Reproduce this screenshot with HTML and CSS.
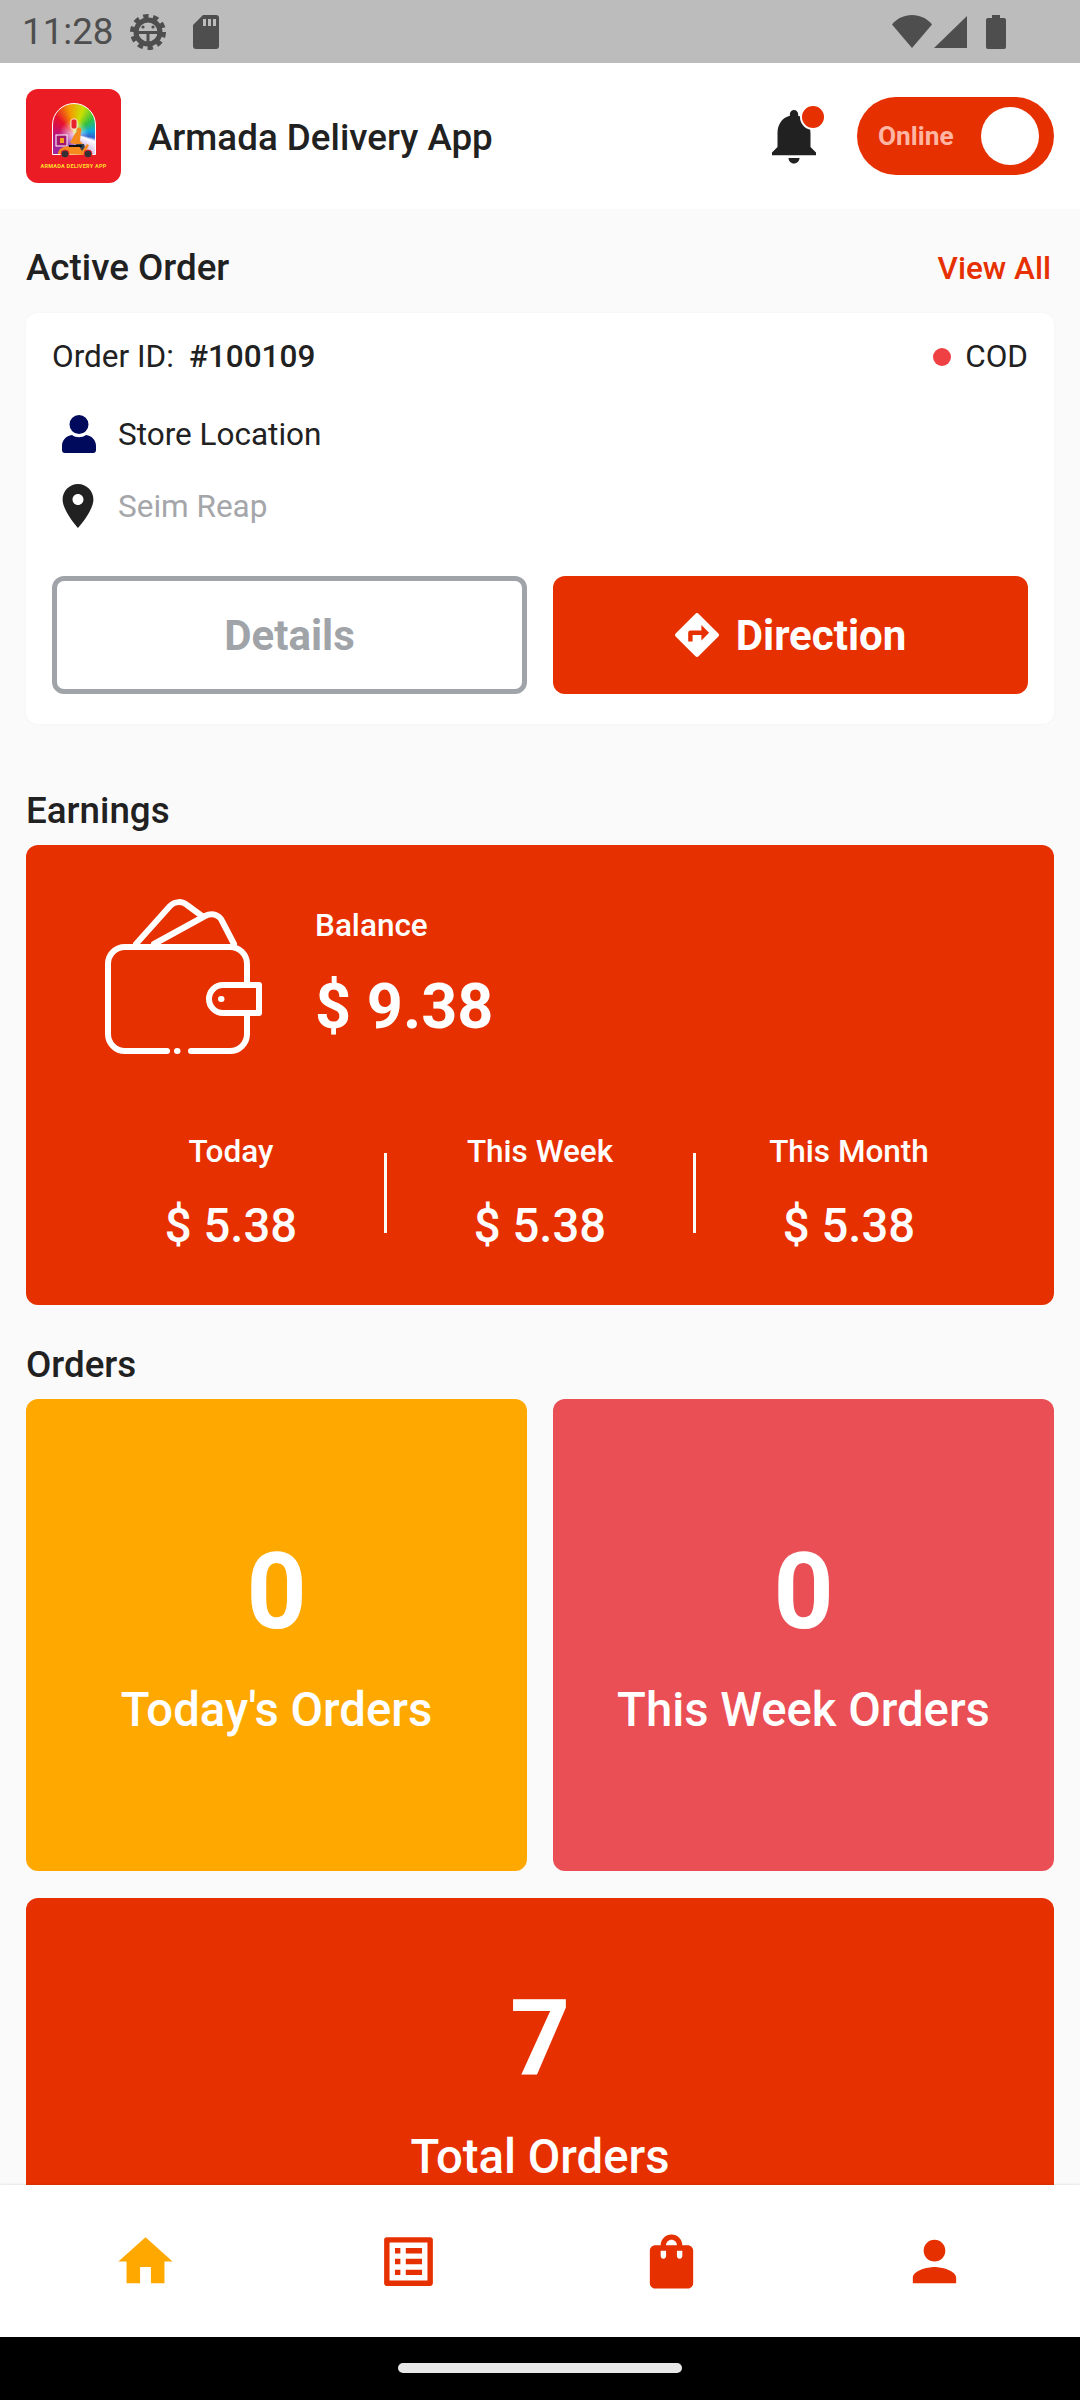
FILE: index.html
```html
<!DOCTYPE html>
<html lang="en">
<head>
  <meta charset="UTF-8">
  <title>Armada Delivery App</title>
  <link rel="stylesheet" href="styles.css">
</head>
<body>

  <div class="status-bar">
    <span class="status-time">11:28</span>
    <svg class="ic-gear" viewBox="0 0 36 36">
      <circle cx="18" cy="18" r="15.5" fill="none" stroke="#4e4e4e" stroke-width="5" stroke-dasharray="5.2 4.5"/>
      <circle cx="18" cy="18" r="12" fill="none" stroke="#4e4e4e" stroke-width="5"/>
      <rect x="7" y="17" width="22" height="3" fill="#4e4e4e"/>
      <rect x="16.5" y="17" width="3" height="12" fill="#4e4e4e"/>
      <circle cx="13" cy="13" r="1.6" fill="#4e4e4e"/>
      <circle cx="23" cy="13" r="1.6" fill="#4e4e4e"/>
    </svg>
    <svg class="ic-sd" viewBox="0 0 26 34">
      <path fill="#4e4e4e" d="M10 0h13a3 3 0 0 1 3 3v28a3 3 0 0 1-3 3H3a3 3 0 0 1-3-3V10z"/>
      <path fill="#bcbcbc" d="M10 4h3v7h-3zM15 4h3v7h-3zM20 4h3v7h-3z"/>
    </svg>
    <span class="status-spacer"></span>
    <svg class="ic-wifi" viewBox="0 0 40 33"><path fill="#4e4e4e" d="M20 33 0 9.500C5 3.500 12 0 20 0s15 3.500 20 9.500z"/></svg>
    <svg class="ic-signal" viewBox="0 0 33 32"><path fill="#4e4e4e" d="M33 0v32H0z"/></svg>
    <svg class="ic-battery" viewBox="0 0 20 34"><path fill="#4e4e4e" d="M6 0h8v3h4a2 2 0 0 1 2 2v27a2 2 0 0 1-2 2H2a2 2 0 0 1-2-2V5a2 2 0 0 1 2-2h4z"/></svg>
  </div>

  <header class="app-bar">
    <div class="logo">
      <div class="logo-arch">
        <svg class="logo-scooter" viewBox="0 0 44 56">
          <rect x="19" y="16" width="6" height="10" rx="2" fill="#e8232a" stroke="#fff" stroke-width=".8"/>
          <rect x="4" y="32" width="11" height="11" fill="#a3166e" stroke="#fff" stroke-width="1"/>
          <rect x="8" y="35" width="4" height="5" fill="#f6a21c"/>
          <path d="M18 40l4-8 3-4 4 1-1 9 5 5z" fill="#f58a1f"/>
          <circle cx="27" cy="27" r="2.500" fill="#f58a1f"/>
          <path d="M24 41h8l2 7h-8z" fill="#33404f"/>
          <path d="M6 51c0-5 5-8 12-8h9l3 5 5-7 2 1-5 10z" fill="#f58a1f"/>
          <path d="M17 42h13v2H17z" fill="#111"/>
          <circle cx="13" cy="51" r="4" fill="#333" stroke="#e8232a"/>
          <circle cx="36" cy="51" r="4" fill="#333" stroke="#e8232a"/>
        </svg>
      </div>
      <span class="logo-text">ARMADA DELIVERY APP</span>
    </div>
    <h1 class="app-title">Armada Delivery App</h1>
    <div class="bell">
      <svg class="ic-bell" viewBox="0 0 24 24"><path fill="#212121" d="M12 22c1.100 0 2-.9 2-2h-4c0 1.100.89 2 2 2zm6-6v-5c0-3.070-1.640-5.640-4.500-6.320V4c0-.83-.67-1.500-1.500-1.500s-1.500.67-1.500 1.500v.68C7.630 5.360 6 7.920 6 11v5l-2 2v1h16v-1l-2-2z"/></svg>
      <span class="bell-dot"></span>
    </div>
    <div class="toggle">
      <span class="toggle-label">Online</span>
      <span class="toggle-knob"></span>
    </div>
  </header>

  <main class="content">
    <div class="section-head">
      <h2 class="section-title">Active Order</h2>
      <a class="view-all">View All</a>
    </div>

    <section class="order-card">
      <div class="order-top">
        <span class="order-id">Order ID:<b>#100109</b></span>
        <span class="order-pay"><i class="pay-dot"></i>COD</span>
      </div>
      <div class="order-line order-store">
        <svg class="ic-line" viewBox="0 0 52 44"><path fill="#000a5c" d="M27 3a9.500 9.500 0 0 1 0 19 9.500 9.500 0 0 1 0-19zM20 23c4 3 10 3 14 0 6 1 10 5 10 11v4c0 2-1 3-3 3H13c-2 0-3-1-3-3v-4c0-6 4-10 10-11z"/></svg>
        <span>Store Location</span>
      </div>
      <div class="order-line order-place">
        <svg class="ic-line" viewBox="0 0 52 44"><g transform="translate(-.4 -4.400) scale(2.200)"><path fill="#212121" d="M12 2C8.130 2 5 5.130 5 9c0 5.250 7 13 7 13s7-7.750 7-13c0-3.870-3.130-7-7-7zm0 9.500c-1.380 0-2.500-1.120-2.500-2.500s1.120-2.500 2.500-2.500 2.500 1.120 2.500 2.500-1.120 2.500-2.500 2.500z"/></g></svg>
        <span>Seim Reap</span>
      </div>
      <div class="order-buttons">
        <button class="btn btn-outline">Details</button>
        <button class="btn btn-solid">
          <svg class="ic-direction" viewBox="2 2 20 20"><path fill="#fff" d="M21.710 11.290l-9-9c-.39-.39-1.020-.39-1.410 0l-9 9c-.39.39-.39 1.020 0 1.410l9 9c.39.39 1.020.39 1.410 0l9-9c.39-.38.39-1.010 0-1.410zM14 14.500V12h-4v3H8v-4c0-.55.45-1 1-1h5V7.500l3.500 3.500-3.500 3.500z"/></svg>
          Direction
        </button>
      </div>
    </section>

    <h2 class="section-title earnings-title">Earnings</h2>
    <section class="earn-card">
      <div class="earn-top">
        <svg class="ic-wallet" viewBox="0 0 158 158" fill="none" stroke="#fff" stroke-width="6" stroke-linecap="round" stroke-linejoin="round">
          <path d="M142 86V66a17 17 0 0 0-17-17H20A17 17 0 0 0 3 66v70a17 17 0 0 0 17 17h42M86 153h39a17 17 0 0 0 17-17v-19"/>
          <path d="M72 153h.5"/>
          <path d="M154 87h-36a14 14 0 0 0 0 28h36z"/>
          <path d="M116 101h.5"/>
          <path d="M31 46 65 8c5-5 12-5 17-1l15 11"/>
          <path d="M49 46 100 18c6-3 12-2 16 3l13 25"/>
        </svg>
        <div class="balance">
          <div class="balance-label">Balance</div>
          <div class="balance-value">$ 9.38</div>
        </div>
      </div>
      <div class="earn-stats">
        <div class="stat">
          <div class="stat-label">Today</div>
          <div class="stat-value">$ 5.38</div>
        </div>
        <span class="stat-line"></span>
        <div class="stat">
          <div class="stat-label">This Week</div>
          <div class="stat-value">$ 5.38</div>
        </div>
        <span class="stat-line"></span>
        <div class="stat">
          <div class="stat-label">This Month</div>
          <div class="stat-value">$ 5.38</div>
        </div>
      </div>
    </section>

    <h2 class="section-title orders-title">Orders</h2>
    <div class="orders-grid">
      <div class="count-card count-yellow">
        <div class="count-num">0</div>
        <div class="count-label">Today's Orders</div>
      </div>
      <div class="count-card count-pink">
        <div class="count-num">0</div>
        <div class="count-label">This Week Orders</div>
      </div>
    </div>
    <div class="count-card count-total">
      <div class="count-num">7</div>
      <div class="count-label">Total Orders</div>
    </div>
  </main>

  <nav class="bottom-nav">
    <svg class="ic-nav" viewBox="0 0 24 24"><path fill="#ffa800" d="M10 20v-6h4v6h5v-8h3L12 3 2 12h3v8z"/></svg>
    <svg class="ic-nav" viewBox="0 0 24 24"><path fill="#e63000" d="M19 5v14H5V5h14m1.100-2H3.900c-.5 0-.9.4-.9.9v16.200c0 .4.4.9.9.9h16.200c.4 0 .9-.5.9-.9V3.900c0-.5-.5-.9-.9-.9zM11 7h6v2h-6V7zm0 4h6v2h-6v-2zm0 4h6v2h-6v-2zM7 7h2v2H7zm0 4h2v2H7zm0 4h2v2H7z"/></svg>
    <svg class="ic-nav" viewBox="0 0 24 24"><path fill="#e63000" d="M18 6h-2c0-2.210-1.790-4-4-4S8 3.790 8 6H6c-1.100 0-2 .9-2 2v12c0 1.100.9 2 2 2h12c1.100 0 2-.9 2-2V8c0-1.100-.9-2-2-2zm-8 4c0 .55-.45 1-1 1s-1-.45-1-1V8h2v2zm2-6c1.100 0 2 .9 2 2h-4c0-1.100.9-2 2-2zm4 6c0 .55-.45 1-1 1s-1-.45-1-1V8h2v2z"/></svg>
    <svg class="ic-nav" viewBox="0 0 24 24"><path fill="#e63000" d="M12 12c2.210 0 4-1.790 4-4s-1.790-4-4-4-4 1.790-4 4 1.790 4 4 4zm0 2c-2.670 0-8 1.340-8 4v2h16v-2c0-2.660-5.330-4-8-4z"/></svg>
  </nav>

  <div class="gesture-bar"><span class="gesture-pill"></span></div>

</body>
</html>
```

FILE: styles.css
```css
* {
  box-sizing: border-box;
}
html, body {
  margin: 0;
  height: 2400px;
}
body {
  display: flex;
  flex-direction: column;
  overflow: hidden;
  background: #fafafa;
  color: #212121;
  font-family: Roboto, "Liberation Sans", sans-serif;
}
h1, h2 {
  margin: 0;
}

/* status bar */
.status-bar {
  height: 63px;
  flex: none;
  display: flex;
  align-items: center;
  padding: 0 74px 0 22px;
  background: #bcbcbc;
  color: #4e4e4e;
}
.status-time {
  font-size: 36.75px;
  line-height: 63px;
  width: 108px;
}
.ic-gear {
  width: 36px;
  height: 36px;
}
.ic-sd {
  width: 26px;
  height: 34px;
  margin-left: 27px;
}
.status-spacer {
  flex: 1;
}
.ic-wifi {
  width: 40px;
  height: 33px;
}
.ic-signal {
  width: 33px;
  height: 32px;
  margin-left: 2px;
}
.ic-battery {
  width: 20px;
  height: 34px;
  margin-left: 19px;
}

/* app bar */
.app-bar {
  height: 146px;
  flex: none;
  display: flex;
  align-items: center;
  padding: 0 26px;
  background: #fff;
}
.logo {
  width: 95px;
  height: 94px;
  flex: none;
  display: flex;
  flex-direction: column;
  align-items: center;
  padding-top: 14px;
  border-radius: 12px;
  background: #ec1c24;
}
.logo-arch {
  position: relative;
  width: 44px;
  height: 52px;
  border: 1px solid #fff;
  border-radius: 22px 22px 0 0;
  background:
    radial-gradient(circle at 50% 60%, #fffc 0, #fff0 40%),
    conic-gradient(from -90deg at 50% 60%, #c2127a, #e8102a 45deg, #f59a00 80deg, #c9e000 110deg, #33c040 140deg, #10a8e0 170deg, #3060d0 190deg, #fff 200deg, #8a2fb0 290deg, #c2127a);
}
.logo-scooter {
  position: absolute;
  left: -1px;
  top: -1px;
  width: 44px;
  height: 56px;
  overflow: visible;
}
.logo-text {
  margin-top: 8px;
  font-size: 5.5px;
  line-height: 7px;
  font-weight: 700;
  letter-spacing: .25px;
  white-space: nowrap;
  color: #ffdf2b;
}
.app-title {
  flex: 1;
  margin: 3px 0 0 27px;
  font-size: 36.75px;
  font-weight: 500;
}
.bell {
  position: relative;
  width: 66px;
  height: 66px;
  margin-right: 30px;
}
.ic-bell {
  display: block;
  width: 66px;
  height: 66px;
}
.bell-dot {
  position: absolute;
  left: 39px;
  top: 1px;
  width: 26px;
  height: 26px;
  border-radius: 50%;
  border: 2px solid #fff;
  background: #e63000;
}
.toggle {
  width: 197px;
  height: 78px;
  display: flex;
  align-items: center;
  justify-content: space-between;
  padding: 0 15px 0 21px;
  border-radius: 39px;
  background: #e63000;
}
.toggle-label {
  font-size: 26.25px;
  font-weight: 700;
  color: #ffb5a3;
}
.toggle-knob {
  width: 58px;
  height: 58px;
  border-radius: 50%;
  background: #fff;
}

/* main content */
.content {
  flex: 1;
  min-height: 0;
  overflow: hidden;
  padding: 39px 26px 0;
}
.section-head {
  display: flex;
  justify-content: space-between;
  align-items: center;
  margin-bottom: 25px;
}
.section-title {
  font-size: 36.75px;
  line-height: 40px;
  font-weight: 500;
}
.view-all {
  padding-right: 3px;
  font-size: 31.5px;
  font-weight: 500;
  color: #e63000;
}

.order-card {
  padding: 26px 26px 30px;
  border-radius: 12px;
  background: #fff;
  box-shadow: 0 0 3px #0000000a;
}
.order-top {
  display: flex;
  justify-content: space-between;
  font-size: 31.5px;
  line-height: 36px;
}
.order-id b {
  margin-left: 15px;
  font-weight: 500;
}
.order-pay {
  display: flex;
  align-items: center;
}
.pay-dot {
  width: 18px;
  height: 18px;
  margin-right: 14px;
  border-radius: 50%;
  background: #ef4044;
}
.order-line {
  display: flex;
  align-items: center;
  height: 44px;
  font-size: 31.5px;
}
.order-store {
  margin-top: 37px;
}
.order-place {
  margin-top: 28px;
  color: #a4a6aa;
}
.ic-line {
  width: 52px;
  height: 44px;
  margin-right: 14px;
}
.order-buttons {
  display: grid;
  grid-template-columns: 1fr 1fr;
  gap: 26px;
  margin-top: 48px;
}
.btn {
  height: 118px;
  display: flex;
  align-items: center;
  justify-content: center;
  gap: 17px;
  border-radius: 12px;
  font-family: inherit;
  font-size: 42px;
  font-weight: 700;
}
.btn-outline {
  border: 5px solid #a0a4a9;
  background: #fff;
  color: #a0a4a9;
}
.btn-solid {
  border: none;
  background: #e63000;
  color: #fff;
}
.ic-direction {
  width: 44px;
  height: 44px;
}

/* earnings */
.earnings-title {
  margin: 67px 0 14px;
}
.earn-card {
  padding: 53px 52px 51px;
  border-radius: 12px;
  background: #e63000;
  color: #fff;
}
.earn-top {
  display: flex;
  padding-left: 27px;
}
.ic-wallet {
  width: 158px;
  height: 158px;
  overflow: visible;
}
.balance {
  margin-left: 52px;
  padding-top: 8px;
}
.balance-label {
  font-size: 31.5px;
  line-height: 40px;
  font-weight: 500;
}
.balance-value {
  margin-top: 25px;
  font-size: 63px;
  line-height: 72px;
  font-weight: 700;
}
.earn-stats {
  display: flex;
  align-items: center;
  margin-top: 76px;
}
.stat {
  flex: 1;
  text-align: center;
}
.stat-label {
  font-size: 31.5px;
  line-height: 40px;
  font-weight: 500;
}
.stat-value {
  margin-top: 26px;
  font-size: 47.25px;
  line-height: 56px;
  font-weight: 500;
}
.stat-line {
  width: 3px;
  height: 80px;
  background: #fff;
}

/* orders */
.orders-title {
  margin: 40px 0 14px;
}
.orders-grid {
  display: grid;
  grid-template-columns: 1fr 1fr;
  gap: 26px;
}
.count-card {
  height: 472px;
  padding-top: 134px;
  border-radius: 12px;
  text-align: center;
  color: #fff;
}
.count-yellow {
  background: #ffa800;
}
.count-pink {
  background: #e94f55;
}
.count-total {
  margin-top: 27px;
  padding-top: 82px;
  background: #e63000;
}
.count-num {
  font-size: 105px;
  line-height: 120px;
  font-weight: 700;
}
.count-label {
  margin-top: 27px;
  font-size: 47.25px;
  line-height: 60px;
  font-weight: 500;
}

/* bottom */
.bottom-nav {
  height: 152px;
  flex: none;
  display: grid;
  grid-template-columns: repeat(4, 1fr);
  justify-items: center;
  align-items: center;
  padding: 0 14px;
  background: #fff;
  box-shadow: 0 -1px 2px #00000014;
}
.ic-nav {
  width: 65px;
  height: 65px;
}
.gesture-bar {
  height: 63px;
  flex: none;
  padding: 26px 0 0;
  background: #000;
}
.gesture-pill {
  display: block;
  width: 284px;
  height: 10px;
  margin: 0 auto;
  border-radius: 5px;
  background: #e8e8e8;
}
```
